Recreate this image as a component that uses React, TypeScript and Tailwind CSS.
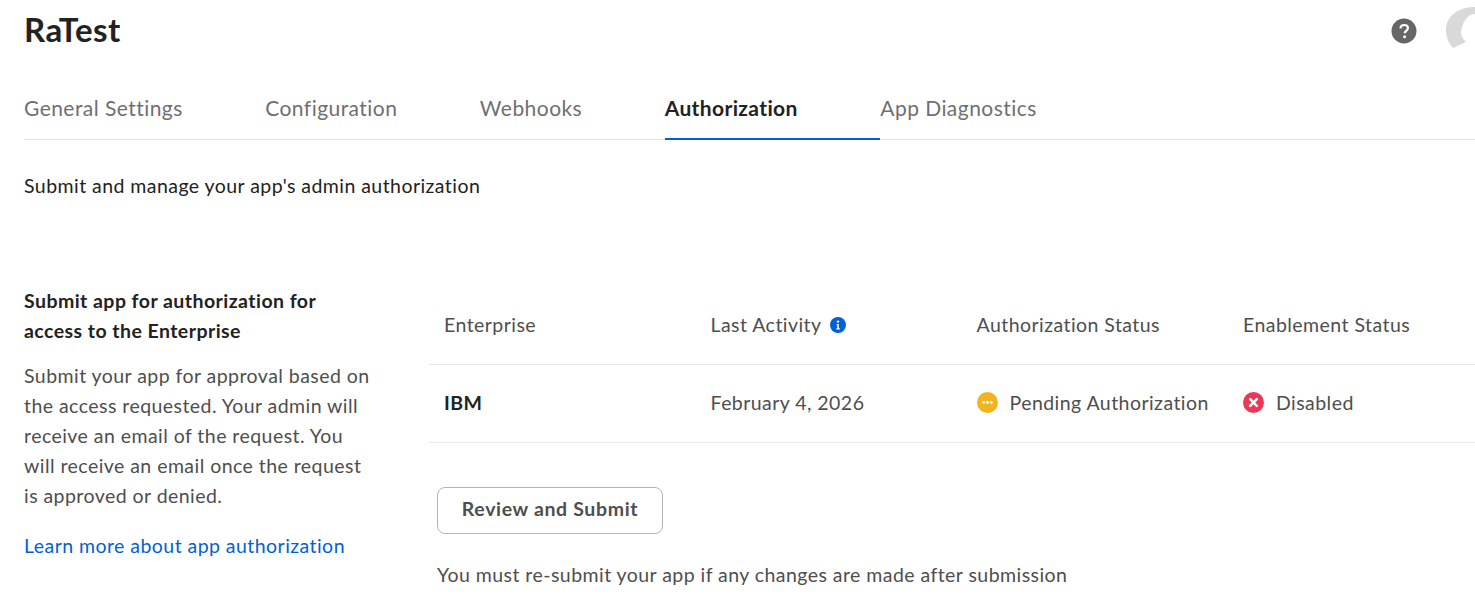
const TABS = ['General Settings', 'Configuration', 'Webhooks', 'Authorization', 'App Diagnostics'];
const COLUMNS = 'grid grid-cols-[266.5px_266px_266.5px_1fr] pl-[15px]';

function HelpIcon() {
  return (
    <svg width="26" height="26" viewBox="0 0 26 26" className="shrink-0">
      <circle cx="13" cy="13" r="12.5" fill="#666666" />
      <path d="M9.4 10.3c.2-2.1 1.700-3.300 3.800-3.300 2.200 0 3.700 1.300 3.700 3.100 0 1.400-.8 2.200-1.800 2.900-1 .7-1.400 1.200-1.400 2.300" fill="none" stroke="#fff" strokeWidth="2.200" />
      <circle cx="13.600" cy="18.800" r="1.500" fill="#fff" />
    </svg>
  );
}

function InfoIcon() {
  return (
    <svg width="16" height="16" viewBox="0 0 16 16" className="shrink-0">
      <circle cx="8" cy="8" r="8" fill="#0061d5" />
      <circle cx="8" cy="4.600" r="1.200" fill="#fff" />
      <path d="M6.600 7h2.200v4.300h1v1.100H6.300v-1.100h1V8.100h-.7z" fill="#fff" />
    </svg>
  );
}

function PendingIcon() {
  return (
    <svg width="21" height="21" viewBox="0 0 21 21" className="shrink-0">
      <circle cx="10.500" cy="10.500" r="10.500" fill="#f5b31b" />
      <circle cx="6.600" cy="10.500" r="1.400" fill="#fff" />
      <circle cx="10.500" cy="10.500" r="1.400" fill="#fff" />
      <circle cx="14.400" cy="10.500" r="1.400" fill="#fff" />
    </svg>
  );
}

function DisabledIcon() {
  return (
    <svg width="21" height="21" viewBox="0 0 21 21" className="shrink-0">
      <circle cx="10.500" cy="10.500" r="10.500" fill="#ed3757" />
      <path d="M7.200 7.200l6.600 6.600M13.800 7.200l-6.600 6.600" stroke="#fff" strokeWidth="2.600" strokeLinecap="round" />
    </svg>
  );
}

export default function App() {
  return (
    <div className="h-[604px] w-[1475px] overflow-hidden bg-white font-['Lato',sans-serif] text-[19.5px] tracking-[0.45px] text-[#222222]">
      {/* Header */}
      <div className="flex h-[60px] items-start justify-between pl-6">
        <h1 className="mt-[8px] text-[33px] font-bold leading-[42px] text-[#222222]">RaTest</h1>
        <div className="flex items-start">
          <div className="mt-[18px]">
            <HelpIcon />
          </div>
          <svg width="30" height="44" viewBox="0 0 30 44" className="ml-[28px] mt-[7px] shrink-0">
            <path d="M30 0C12 0 1 10 1 23c0 7 3 14 7 18l13-6c-4-4-5-7-5-10C17 16 22 7 30 7z" fill="#d9d9d9" />
          </svg>
        </div>
      </div>

      {/* Tabs */}
      <div className="ml-6 flex h-[80px] border-b border-[#e3e3e3] pt-[28px]">
        {TABS.map((tab) => (
          <div
            key={tab}
            className={`h-[52px] pr-[82.500px] text-[21px] leading-[40px] ${
              tab === 'Authorization'
                ? 'border-b-2 border-[#0061d5] font-bold tracking-[0.37px] text-[#222222]'
                : 'text-[#6f6f6f]'
            }`}
          >
            {tab}
          </div>
        ))}
      </div>

      <p className="ml-6 mt-[31px] leading-[30px] text-[#222222]">
        Submit and manage your app's admin authorization
      </p>

      <div className="ml-6 mt-[85px] flex">
        {/* Description */}
        <div className="w-[405px] shrink-0">
          <h2 className="w-[320px] font-bold leading-[30px] text-[#222222]">
            Submit app for authorization for access to the Enterprise
          </h2>
          <p className="mt-[15px] w-[350px] leading-[30px] text-[#4e4e4e]">
            Submit your app for approval based on the access requested. Your admin will receive an email of the request. You will receive an email once the request is approved or denied.
          </p>
          <a className="mt-[20px] block leading-[30px] text-[#0061d5]">
            Learn more about app authorization
          </a>
        </div>

        {/* Table */}
        <div className="min-w-0 flex-1">
          <div className={`${COLUMNS} h-[79px] items-center border-b border-[#e8e8e8] pb-[1px] text-[#4e4e4e]`}>
            <div>Enterprise</div>
            <div className="flex items-center gap-[8px]">
              Last Activity
              <InfoIcon />
            </div>
            <div>Authorization Status</div>
            <div>Enablement Status</div>
          </div>
          <div className={`${COLUMNS} h-[78px] items-center border-b border-[#e8e8e8] pb-[2px] text-[#4e4e4e]`}>
            <div className="font-bold text-[#222222]">IBM</div>
            <div>February 4, 2026</div>
            <div className="flex items-center gap-[12px]">
              <PendingIcon />
              Pending Authorization
            </div>
            <div className="flex items-center gap-[12px]">
              <DisabledIcon />
              Disabled
            </div>
          </div>
          <button className="ml-2 mt-[44px] h-[47px] w-[226px] rounded-[8px] border border-[#b5b5b5] bg-white pb-[3px] font-bold tracking-[0.65px] text-[#4e4e4e]">
            Review and Submit
          </button>
          <p className="ml-2 mt-[26px] leading-[30px] text-[#4e4e4e]">
            You must re-submit your app if any changes are made after submission
          </p>
        </div>
      </div>
    </div>
  );
}
